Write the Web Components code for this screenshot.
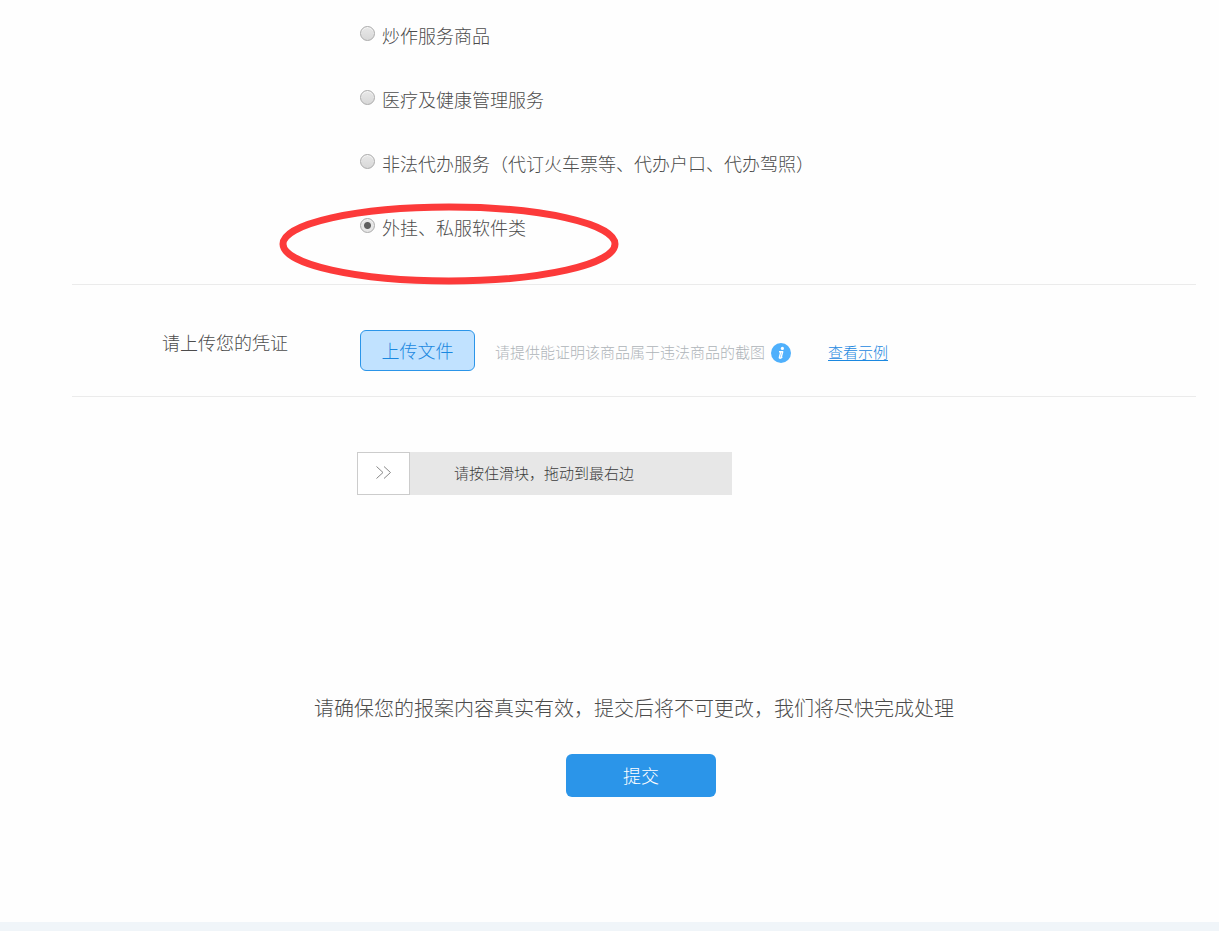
<!DOCTYPE html>
<html lang="zh-CN">
<head>
<meta charset="utf-8">
<meta name="viewport" content="width=device-width, initial-scale=1">
<title>举报</title>
<style>
  body { margin: 0; background: #fefefe; color: #4c4c4c; font: 300 18px/26px "Noto Sans CJK SC", sans-serif; }
</style>
</head>
<body>
<report-page>
  <form-section>
    <option-list>
      <radio-option name="kind">炒作服务商品</radio-option>
      <radio-option name="kind">医疗及健康管理服务</radio-option>
      <radio-option name="kind">非法代办服务（代订火车票等、代办户口、代办驾照）</radio-option>
      <radio-option name="kind" checked marked>外挂、私服软件类</radio-option>
    </option-list>
  </form-section>
  <form-section upload>
    <span slot="label">请上传您的凭证</span>
    <upload-field></upload-field>
  </form-section>
  <slide-verify>请按住滑块，拖动到最右边</slide-verify>
  <submit-panel>请确保您的报案内容真实有效，提交后将不可更改，我们将尽快完成处理</submit-panel>
</report-page>

<script>
const define = (name, html, setup) => {
  customElements.define(name, class extends HTMLElement {
    constructor() {
      super();
      const template = document.createElement('template');
      template.innerHTML = html;
      this.attachShadow({ mode: 'open' }).append(template.content.cloneNode(true));
    }
    connectedCallback() { if (setup) setup(this, this.shadowRoot); }
  });
};

define('report-page', `
  <style>
    :host { display: flex; flex-direction: column; min-height: 100vh; }
    main { flex: 1; padding: 0 23px 0 72px; }
    footer { height: 9px; background: #f0f5f9; }
  </style>
  <main><slot></slot></main>
  <footer></footer>`);

define('form-section', `
  <style>
    :host { display: grid; grid-template-columns: 198px 1fr; padding: 3px 0 25px 90px; border-bottom: 1px solid #ebebeb; }
    :host([upload]) { padding-top: 45px; padding-bottom: 25px; }
    .label { line-height: 24px; }
  </style>
  <div class="label"><slot name="label"></slot></div>
  <div><slot></slot></div>`);

define('option-list', `
  <style>:host { display: flex; flex-direction: column; }</style>
  <slot></slot>`);

define('radio-option', `
  <style>
    :host { display: flex; align-items: center; height: 64px; position: relative; }
    label { display: flex; align-items: flex-start; gap: 7px; white-space: nowrap; }
    input {
      appearance: none; box-sizing: border-box; width: 15px; height: 15px; margin: 4px 0 0; border: 1px solid #aaa;
      border-radius: 50%; background: linear-gradient(#e8e8e8, #d8d8d8); box-shadow: inset 0 1px 0 #f6f6f6;
    }
    input:checked { background: radial-gradient(circle, #5e5e5e 3px, #e6e6e6 4px); }
    svg { display: none; position: absolute; left: -81px; top: 8px; width: 340px; height: 82px; pointer-events: none; }
    :host([marked]) svg { display: block; }
  </style>
  <label><input type="radio"><span><slot></slot></span></label>
  <svg viewBox="0 0 340 82" aria-hidden="true"><ellipse cx="170" cy="41" rx="166" ry="37" fill="none" stroke="#fc3a3a" stroke-width="7"/></svg>`,
  (host, root) => {
    const input = root.querySelector('input');
    input.name = host.getAttribute('name');
    input.checked = host.hasAttribute('checked');
    input.addEventListener('change', () => {
      for (const other of host.parentElement.children) {
        if (other !== host) other.shadowRoot.querySelector('input').checked = false;
      }
    });
  });

define('info-icon', `
  <style>:host { display: block; width: 20px; height: 20px; } svg { display: block; }</style>
  <svg width="20" height="20" viewBox="0 0 20 20" role="img" aria-label="提示">
    <circle cx="10" cy="10" r="10" fill="#4fb0fc"/>
    <circle cx="11.4" cy="5.4" r="1.6" fill="#fff"/>
    <path d="M8 8.7h3.7l-1.5 5.7h1.2M8.1 8.8h1.5M9.7 9.2l-1.3 5.2c-.2 1 .9 1 2.1.2" fill="none" stroke="#fff" stroke-width="1.4" stroke-linejoin="round"/>
  </svg>`);

define('upload-field', `
  <style>
    :host { display: flex; align-items: center; white-space: nowrap; }
    button {
      box-sizing: border-box; width: 115px; height: 41px; padding: 0 0 2px; border: 1px solid #2b95e9;
      border-radius: 6px; background: #c1e2ff; color: #1b88e0; font: inherit;
    }
    span { margin: 3px 6px 0 20px; color: #aeb4b9; font-size: 15px; }
    info-icon { margin-top: 4px; }
    a { margin: 3px 0 0 37px; color: #1b88e0; font-size: 15px; text-underline-offset: 2px; }
  </style>
  <button type="button">上传文件</button>
  <span>请提供能证明该商品属于违法商品的截图</span>
  <info-icon></info-icon>
  <a href="#example">查看示例</a>`);

define('slide-verify', `
  <style>
    :host { display: grid; width: 375px; height: 43px; margin: 55px 0 0 285px; background: #e7e7e7; align-items: center; }
    input, label, svg { grid-area: 1 / 1; }
    input { appearance: none; width: 100%; height: 43px; margin: 0; background: none; }
    input::-webkit-slider-thumb {
      appearance: none; box-sizing: border-box; width: 53px; height: 43px; border: 1px solid #ccc; background: #fff;
    }
    label { padding: 0 0 2px 97px; color: #3c3c3c; font-size: 15px; pointer-events: none; }
    svg { margin: 0 0 2px 19px; pointer-events: none; }
  </style>
  <input id="drag" type="range" min="0" max="100" value="0">
  <label for="drag"><slot></slot></label>
  <svg width="16" height="16" viewBox="0 0 16 16" fill="none" stroke="#888" aria-hidden="true"><path d="M.5 1.5 7 7.5.5 13.5M8 1.5l6.5 6L8 13.5"/></svg>`,
  (host, root) => {
    const arrow = root.querySelector('svg');
    root.querySelector('input').addEventListener('input', e => {
      arrow.style.transform = 'translateX(' + e.target.value / 100 * (host.clientWidth - 53) + 'px)';
    });
  });

define('submit-panel', `
  <style>
    :host { display: flex; flex-direction: column; align-items: center; gap: 31px; padding: 198px 0 125px; }
    p { margin: 0; font-size: 20px; line-height: 30px; }
    button { width: 150px; height: 43px; margin-left: 14px; padding: 0 0 2px; border: 0; border-radius: 6px; background: #2b95e9; color: #fff; font: inherit; }
  </style>
  <p><slot></slot></p>
  <button type="submit">提交</button>`);
</script>
</body>
</html>
